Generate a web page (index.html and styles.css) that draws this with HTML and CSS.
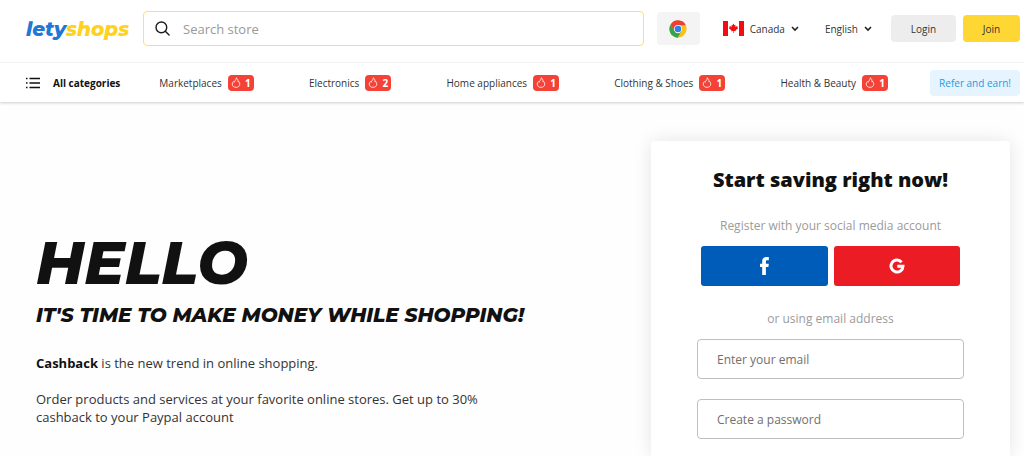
FILE: index.html
```html
<!DOCTYPE html>
<html lang="en">
<head>
<meta charset="utf-8">
<meta name="viewport" content="width=device-width, initial-scale=1">
<title>LetyShops</title>
<link rel="stylesheet" href="styles.css">
</head>
<body>
<svg class="sprite" aria-hidden="true">
  <symbol id="flame" viewBox="0 0 12 14">
    <path d="M6.300 1C6.600 3.500 4.500 4.500 3.600 6.800L2.800 5.800C1.800 6.800 1.200 7.800 1.200 9c0 2.500 2.100 4.200 4.800 4.200S10.800 11.500 10.800 9c0-1.300-.5-2.500-1.300-3.400L8.600 6.500C8.800 4 8 2.200 6.300 1z" fill="none" stroke="currentColor" stroke-linejoin="round"/>
  </symbol>
  <symbol id="chevron" viewBox="0 0 8 6">
    <path d="M1 1l3 3 3-3" fill="none" stroke="currentColor" stroke-width="1.600"/>
  </symbol>
</svg>
<header class="header">
  <div class="topbar">
    <a class="logo" href="#"><span class="logo-lety">lety</span><span class="logo-shops">shops</span></a>
    <form class="search">
      <svg class="search-icon" viewBox="0 0 16 16" aria-hidden="true"><circle cx="6.800" cy="6.800" r="5.700"/><path d="M11 11l4 4"/></svg>
      <input class="search-input" type="search" placeholder="Search store" aria-label="Search store">
    </form>
    <button class="extension" type="button" aria-label="Browser extension">
      <svg class="chrome" viewBox="0 0 48 48" aria-hidden="true">
        <circle cx="24" cy="24" r="23" fill="#fbc116"/>
        <path d="M24 24L14.500 29.500 4.100 12.500A23 23 0 0 0 23 47l10.500-17.500z" fill="#34a350"/>
        <path d="M4.100 12.500A23 23 0 0 1 44.800 14H24L14.500 29.500z" fill="#e94235"/>
        <circle cx="24" cy="24" r="11" fill="#fff"/>
        <circle cx="24" cy="24" r="8.800" fill="#2f7fe8"/>
      </svg>
    </button>
    <div class="picker">
      <svg class="flag" viewBox="0 0 21 15" aria-hidden="true">
        <path d="M0 0h21v15H0z" fill="#fff"/>
        <path d="M0 0h5v15H0zM16 0h5v15h-5z" fill="#f20d12"/>
        <path d="M10.500 2.500l1 1.700 1-.4-.3 2.200 1.300-1.100.3.800 1.200-.2-.5 1.300.6.500-2.500 2 .2 1-2-.3v2h-.6v-2l-2 .3.200-1-2.500-2 .6-.5-.5-1.300 1.200.2.300-.8 1.300 1.100-.3-2.200 1 .4z" fill="#f20d12"/>
      </svg>
      <select class="picker-select" aria-label="Country"><option>Canada</option></select>
      <svg class="chevron" aria-hidden="true"><use href="#chevron"/></svg>
    </div>
    <div class="picker picker-language">
      <select class="picker-select" aria-label="Language"><option>English</option></select>
      <svg class="chevron" aria-hidden="true"><use href="#chevron"/></svg>
    </div>
    <div class="account">
      <button class="btn btn-login" type="button">Login</button>
      <button class="btn btn-join" type="button">Join</button>
    </div>
  </div>
  <nav class="nav">
    <button class="all" type="button">
      <svg class="list-icon" viewBox="0 0 14 12" aria-hidden="true"><path d="M0 1.500h1.500M3.500 1.500H14M0 6h1.500M3.500 6H14M0 10.500h1.500M3.500 10.500H14"/></svg>
      All categories
    </button>
    <div class="categories">
      <a class="category" href="#">Marketplaces <span class="badge"><svg class="flame" aria-hidden="true"><use href="#flame"/></svg>1</span></a>
      <a class="category" href="#">Electronics <span class="badge"><svg class="flame" aria-hidden="true"><use href="#flame"/></svg>2</span></a>
      <a class="category" href="#">Home appliances <span class="badge"><svg class="flame" aria-hidden="true"><use href="#flame"/></svg>1</span></a>
      <a class="category" href="#">Clothing &amp; Shoes <span class="badge"><svg class="flame" aria-hidden="true"><use href="#flame"/></svg>1</span></a>
      <a class="category" href="#">Health &amp; Beauty <span class="badge"><svg class="flame" aria-hidden="true"><use href="#flame"/></svg>1</span></a>
    </div>
    <a class="refer" href="#">Refer and earn!</a>
  </nav>
</header>
<main class="main">
  <section class="hero">
    <h1 class="hero-title">HELLO</h1>
    <h2 class="hero-subtitle">IT'S TIME TO MAKE MONEY WHILE SHOPPING!</h2>
    <p class="hero-text"><strong>Cashback</strong> is the new trend in online shopping.</p>
    <p class="hero-text">Order products and services at your favorite online stores. Get up to 30% cashback to your Paypal account</p>
  </section>
  <form class="card">
    <h2 class="card-title">Start saving right now!</h2>
    <p class="card-note">Register with your social media account</p>
    <div class="social">
      <button class="social-btn facebook" type="button" aria-label="Facebook">
        <svg class="facebook-icon" viewBox="0 0 9 18" aria-hidden="true"><path d="M2.200 18V10H0V6.800h2.200V4.500C2.200 1.600 3.700 0 6.300 0H8.800v3.200H7.200C6.200 3.200 5.900 3.700 5.900 4.600v2.200h2.900L8.400 10H5.900v8z" fill="#fff"/></svg>
      </button>
      <button class="social-btn google" type="button" aria-label="Google">
        <svg class="google-icon" viewBox="0 0 16 16" aria-hidden="true"><path d="M12.600 4.200A6 6 0 1 0 14 8.200H8.300" fill="none" stroke="#fff" stroke-width="3"/></svg>
      </button>
    </div>
    <p class="card-note">or using email address</p>
    <div class="fields">
      <input class="field" type="email" placeholder="Enter your email" aria-label="Enter your email">
      <input class="field" type="password" placeholder="Create a password" aria-label="Create a password">
    </div>
  </form>
</main>
</body>
</html>
```
FILE: styles.css
```css
* { box-sizing: border-box; }
body {
  margin: 0;
  min-height: 100vh;
  display: flex;
  flex-direction: column;
  background: #fefefe;
  color: #333;
  font: 13px/18px "Open Sans", "Noto Sans", sans-serif;
}
h1, h2, p { margin: 0; }
a { color: inherit; text-decoration: none; }
button, input, select { font: inherit; color: inherit; }
button { border: 0; padding: 0; background: none; cursor: pointer; }
.sprite { display: none; }

.header {
  background: #fff;
  box-shadow: 0 1px 3px rgba(0, 0, 0, 0.2);
  font-size: 10px;
}
.topbar {
  display: flex;
  align-items: center;
  padding: 11px 4px 16px 26px;
  border-bottom: 1px solid #f3f3f3;
}
.logo {
  width: 104px;
  margin-right: 13px;
  font: italic 800 20px/32px Montserrat, Lato, sans-serif;
  white-space: nowrap;
}
.logo-lety { color: #1f78d6; }
.logo-shops { color: #ffd21f; }
.search {
  flex: 1;
  display: flex;
  align-items: center;
  gap: 13px;
  height: 35px;
  padding: 0 11px;
  border: 1px solid #ffe06a;
  border-radius: 4px;
}
.search-icon {
  width: 15px;
  height: 15px;
  fill: none;
  stroke: #1b1b1b;
  stroke-width: 1.500;
  stroke-linecap: round;
}
.search-input {
  flex: 1;
  min-width: 0;
  padding: 0;
  border: 0;
  outline: 0;
  background: none;
  font-size: 13px;
}
.search-input::placeholder { color: #999; }
.extension {
  display: flex;
  align-items: center;
  justify-content: center;
  width: 43px;
  height: 33px;
  margin: 0 23px 0 13px;
  border-radius: 4px;
  background: #f4f4f4;
}
.chrome { width: 18px; height: 18px; }
.picker { display: flex; align-items: center; gap: 6px; }
.picker-language { margin: 0 19px 0 26px; }
.picker-select {
  appearance: none;
  field-sizing: content;
  padding: 0;
  border: 0;
  background: none;
}
.flag { width: 21px; height: 15px; }
.chevron { width: 8px; height: 6px; color: #222; }
.account { display: flex; gap: 7px; }
.btn { height: 27px; border-radius: 4px; }
.btn-login { width: 65px; background: #ededed; }
.btn-join { width: 57px; background: #ffd734; }

.nav {
  display: flex;
  align-items: center;
  height: 39px;
  padding: 0 4px 0 26px;
}
.all {
  display: flex;
  align-items: center;
  gap: 13px;
  color: #111;
  font-weight: 700;
}
.list-icon {
  width: 14px;
  height: 12px;
  stroke: #111;
  stroke-width: 1.500;
}
.categories {
  flex: 1;
  display: flex;
  justify-content: space-between;
  margin: 0 42px 0 39px;
}
.category { display: flex; align-items: center; gap: 6px; white-space: nowrap; }
.badge {
  display: flex;
  align-items: center;
  justify-content: center;
  gap: 4px;
  width: 26px;
  height: 16px;
  border-radius: 4px;
  background: #f44336;
  color: #fff;
  font-weight: 700;
}
.flame { width: 10px; height: 11px; }
.refer {
  padding: 4px 9px;
  border-radius: 4px;
  background: #e5f4ff;
  color: #1e9be0;
  white-space: nowrap;
}

.main {
  flex: 1;
  display: flex;
  justify-content: space-between;
  padding: 39px 14px 0 36px;
}
.hero { flex: 0 1 488px; padding-top: 90px; }
.hero-title {
  color: #111;
  font: italic 800 60px/64px Montserrat, Inter, sans-serif;
}
.hero-subtitle {
  margin: 6px 0 25px;
  color: #111;
  font: italic 800 20px/28px Montserrat, Inter, sans-serif;
  white-space: nowrap;
}
.hero-text { margin-bottom: 18px; }
.hero-text strong { color: #111; }
.card {
  flex: 0 1 359px;
  padding: 24px 46px 16px;
  border-radius: 4px 4px 0 0;
  background: #fff;
  box-shadow: 0 0 18px rgba(0, 0, 0, 0.1);
  text-align: center;
}
.card-title {
  margin-bottom: 22px;
  color: #111;
  font-size: 20px;
  line-height: 30px;
  font-weight: 800;
}
.card-note { color: #9b9b9b; font-size: 12px; }
.social { display: flex; gap: 6px; margin: 11px 4px 24px; }
.social-btn {
  flex: 1;
  display: flex;
  align-items: center;
  justify-content: center;
  height: 40px;
  border-radius: 3px;
}
.facebook { background: #005cb9; }
.google { background: #ec1c24; }
.facebook-icon { width: 9px; height: 18px; }
.google-icon { width: 16px; height: 16px; }
.fields { display: grid; gap: 20px; margin-top: 11px; }
.field {
  width: 100%;
  height: 40px;
  padding: 0 19px;
  border: 1px solid #bfbfbf;
  border-radius: 4px;
  background: #fff;
  font-size: 12px;
}
.field::placeholder { color: #6f6f6f; }
```
